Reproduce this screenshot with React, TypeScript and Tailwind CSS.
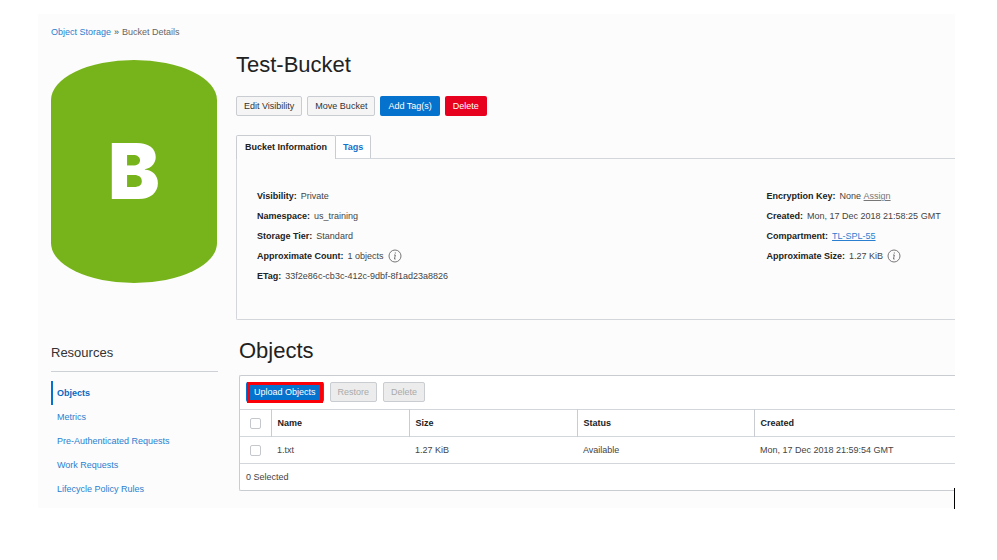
import type { ReactNode } from 'react';

const resources = ['Objects', 'Metrics', 'Pre-Authenticated Requests', 'Work Requests', 'Lifecycle Policy Rules'];

function InfoIcon({ label }: { label: string }) {
  return (
    <svg role="img" aria-label={label} viewBox="0 0 14 14" className="ml-1 inline-block size-[14px] shrink-0" fill="none" stroke="#777">
      <circle cx="7" cy="7" r="6" />
      <path d="M6 6h1.4L6.4 10h1.3" />
      <path d="M7.3 3.4v1.2" />
    </svg>
  );
}

function Detail({ term, children }: { term: string; children: ReactNode }) {
  return (
    <div className="flex h-5 items-center whitespace-nowrap">
      <dt className="mr-1 font-bold text-[#222]">{term}:</dt>
      <dd className="flex items-center">{children}</dd>
    </div>
  );
}

const plainButton = 'h-5 rounded-xs border border-[#c9cdd2] bg-[#f5f5f5] px-[7px] text-[#333]';
const disabledButton = 'h-5 rounded-xs border border-[#c9cdd2] bg-[#ececec] px-[7px] text-[#aaa]';
const tick = 'block size-[11px] appearance-none rounded-xs border border-[#c4c8cd] bg-white checked:bg-[#0572ce]';

export default function App() {
  return (
    <div className="min-h-screen bg-white pt-[14px] pr-[42px] pl-[38px] font-['Liberation_Sans',Arial,sans-serif] text-[9px] leading-3 text-[#444]">
      <div className="relative bg-[#fcfcfc] pt-3 pb-[7px] pl-[13px]">
        <nav aria-label="Breadcrumb" className="flex gap-[3px]">
          <a href="#storage" className="text-[#2a7fd0]">Object Storage</a>
          <span aria-hidden="true">»</span>
          <span className="text-[#666]">Bucket Details</span>
        </nav>

        <div className="mt-3 flex gap-[19px]">
          <div className="mt-[10px] flex h-[223px] w-[166px] shrink-0 items-center justify-center rounded-[50%/40px] bg-[#77b31a] font-['Inter',sans-serif] text-[77px] leading-none font-black text-white">
            B
          </div>
          <main className="min-w-0 flex-1">
            <h1 className="text-[22px] leading-[30px] text-[#222]">Test-Bucket</h1>
            <div className="mt-4 flex gap-[5px]">
              <button type="button" className={plainButton}>Edit Visibility</button>
              <button type="button" className={plainButton}>Move Bucket</button>
              <button type="button" className="h-5 rounded-xs bg-[#0572ce] px-2 text-white">Add Tag(s)</button>
              <button type="button" className="h-5 rounded-xs bg-[#e8001f] px-2 text-white">Delete</button>
            </div>
            <div role="tablist" className="mt-[19px] flex font-bold">
              <button type="button" role="tab" aria-selected="true" className="z-10 -mb-px h-6 rounded-t-xs border border-b-0 border-[#c9cdd2] bg-[#fcfcfc] px-2 pb-px text-[#222]">
                Bucket Information
              </button>
              <button type="button" role="tab" aria-selected="false" className="h-[23px] rounded-tr-xs border-t border-r border-[#c9cdd2] bg-white px-[7px] text-[#1272cc]">
                Tags
              </button>
            </div>
            <div role="tabpanel" className="grid h-[162px] grid-cols-[73fr_27fr] rounded-bl-xs border-y border-l border-[#d3d6da] pt-[27px] pl-5">
              <dl>
                <Detail term="Visibility">Private</Detail>
                <Detail term="Namespace">us_training</Detail>
                <Detail term="Storage Tier">Standard</Detail>
                <Detail term="Approximate Count">1 objects<InfoIcon label="About the object count" /></Detail>
                <Detail term="ETag">33f2e86c-cb3c-412c-9dbf-8f1ad23a8826</Detail>
              </dl>
              <dl>
                <Detail term="Encryption Key">None&nbsp;<a href="#assign" className="text-[#777] underline">Assign</a></Detail>
                <Detail term="Created">Mon, 17 Dec 2018 21:58:25 GMT</Detail>
                <Detail term="Compartment"><a href="#compartment" className="text-[#2a7fd0] underline">TL-SPL-55</a></Detail>
                <Detail term="Approximate Size">1.27 KiB<InfoIcon label="About the size" /></Detail>
              </dl>
            </div>
          </main>
        </div>

        <div className="mt-4 flex gap-[21px]">
          <aside className="w-[167px] shrink-0">
            <h2 className="mt-2 border-b border-[#cdd0d4] pb-[9px] text-[13px] leading-[18px] text-[#333]">Resources</h2>
            <ul className="mt-[9px]">
              {resources.map((name, i) => (
                <li key={name}>
                  <a
                    href={'#' + name}
                    aria-current={i === 0 ? 'page' : undefined}
                    className="flex h-6 items-center border-l-2 border-transparent pl-1 text-[#2a7fd0] aria-[current=page]:border-[#0572ce] aria-[current=page]:font-bold aria-[current=page]:text-[#0a68c0]"
                  >
                    {name}
                  </a>
                </li>
              ))}
            </ul>
          </aside>
          <section className="min-w-0 flex-1">
            <h2 className="text-[22px] leading-[30px] text-[#222]">Objects</h2>
            <div className="mt-[9px] rounded-l-xs border-y border-l border-[#c9cdd2] bg-white">
              <div className="flex gap-[6px] px-[6px] pt-[6px] pb-[7px]">
                <div className="relative">
                  <button type="button" className="block h-5 rounded-xs bg-[#0572ce] px-2 text-white">Upload Objects</button>
                  <span className="pointer-events-none absolute inset-x-px top-0 -bottom-px border-3 border-[#fb0007]" />
                </div>
                <button type="button" disabled className={disabledButton}>Restore</button>
                <button type="button" disabled className={disabledButton}>Delete</button>
              </div>
              <table className="w-full table-fixed border-collapse text-left">
                <colgroup>
                  <col className="w-[31px]" />
                  <col className="w-[138px]" />
                  <col className="w-[168px]" />
                  <col className="w-[177px]" />
                  <col />
                </colgroup>
                <thead>
                  <tr className="h-[27px] border-y border-[#d3d6da] text-[#222]">
                    <th className="border-r border-[#c9cdd2] pl-[10px]"><input type="checkbox" aria-label="Select all objects" className={tick} /></th>
                    <th className="border-r border-[#c9cdd2] pl-[6px]">Name</th>
                    <th className="border-r border-[#c9cdd2] pl-[6px]">Size</th>
                    <th className="border-r border-[#c9cdd2] pl-[6px]">Status</th>
                    <th className="pl-[6px]">Created</th>
                  </tr>
                </thead>
                <tbody>
                  <tr className="h-[27px] border-b border-[#d3d6da]">
                    <td className="pl-[10px]"><input type="checkbox" aria-label="Select 1.txt" className={tick} /></td>
                    <td className="pl-[6px]">1.txt</td>
                    <td className="pl-[6px]">1.27 KiB</td>
                    <td className="pl-[6px]">Available</td>
                    <td className="pl-[6px]">Mon, 17 Dec 2018 21:59:54 GMT</td>
                  </tr>
                </tbody>
              </table>
              <p className="px-[6px] py-[7px]">0 Selected</p>
            </div>
          </section>
        </div>
        <span className="absolute right-0 -bottom-px h-[21px] w-px bg-black" />
      </div>
    </div>
  );
}
